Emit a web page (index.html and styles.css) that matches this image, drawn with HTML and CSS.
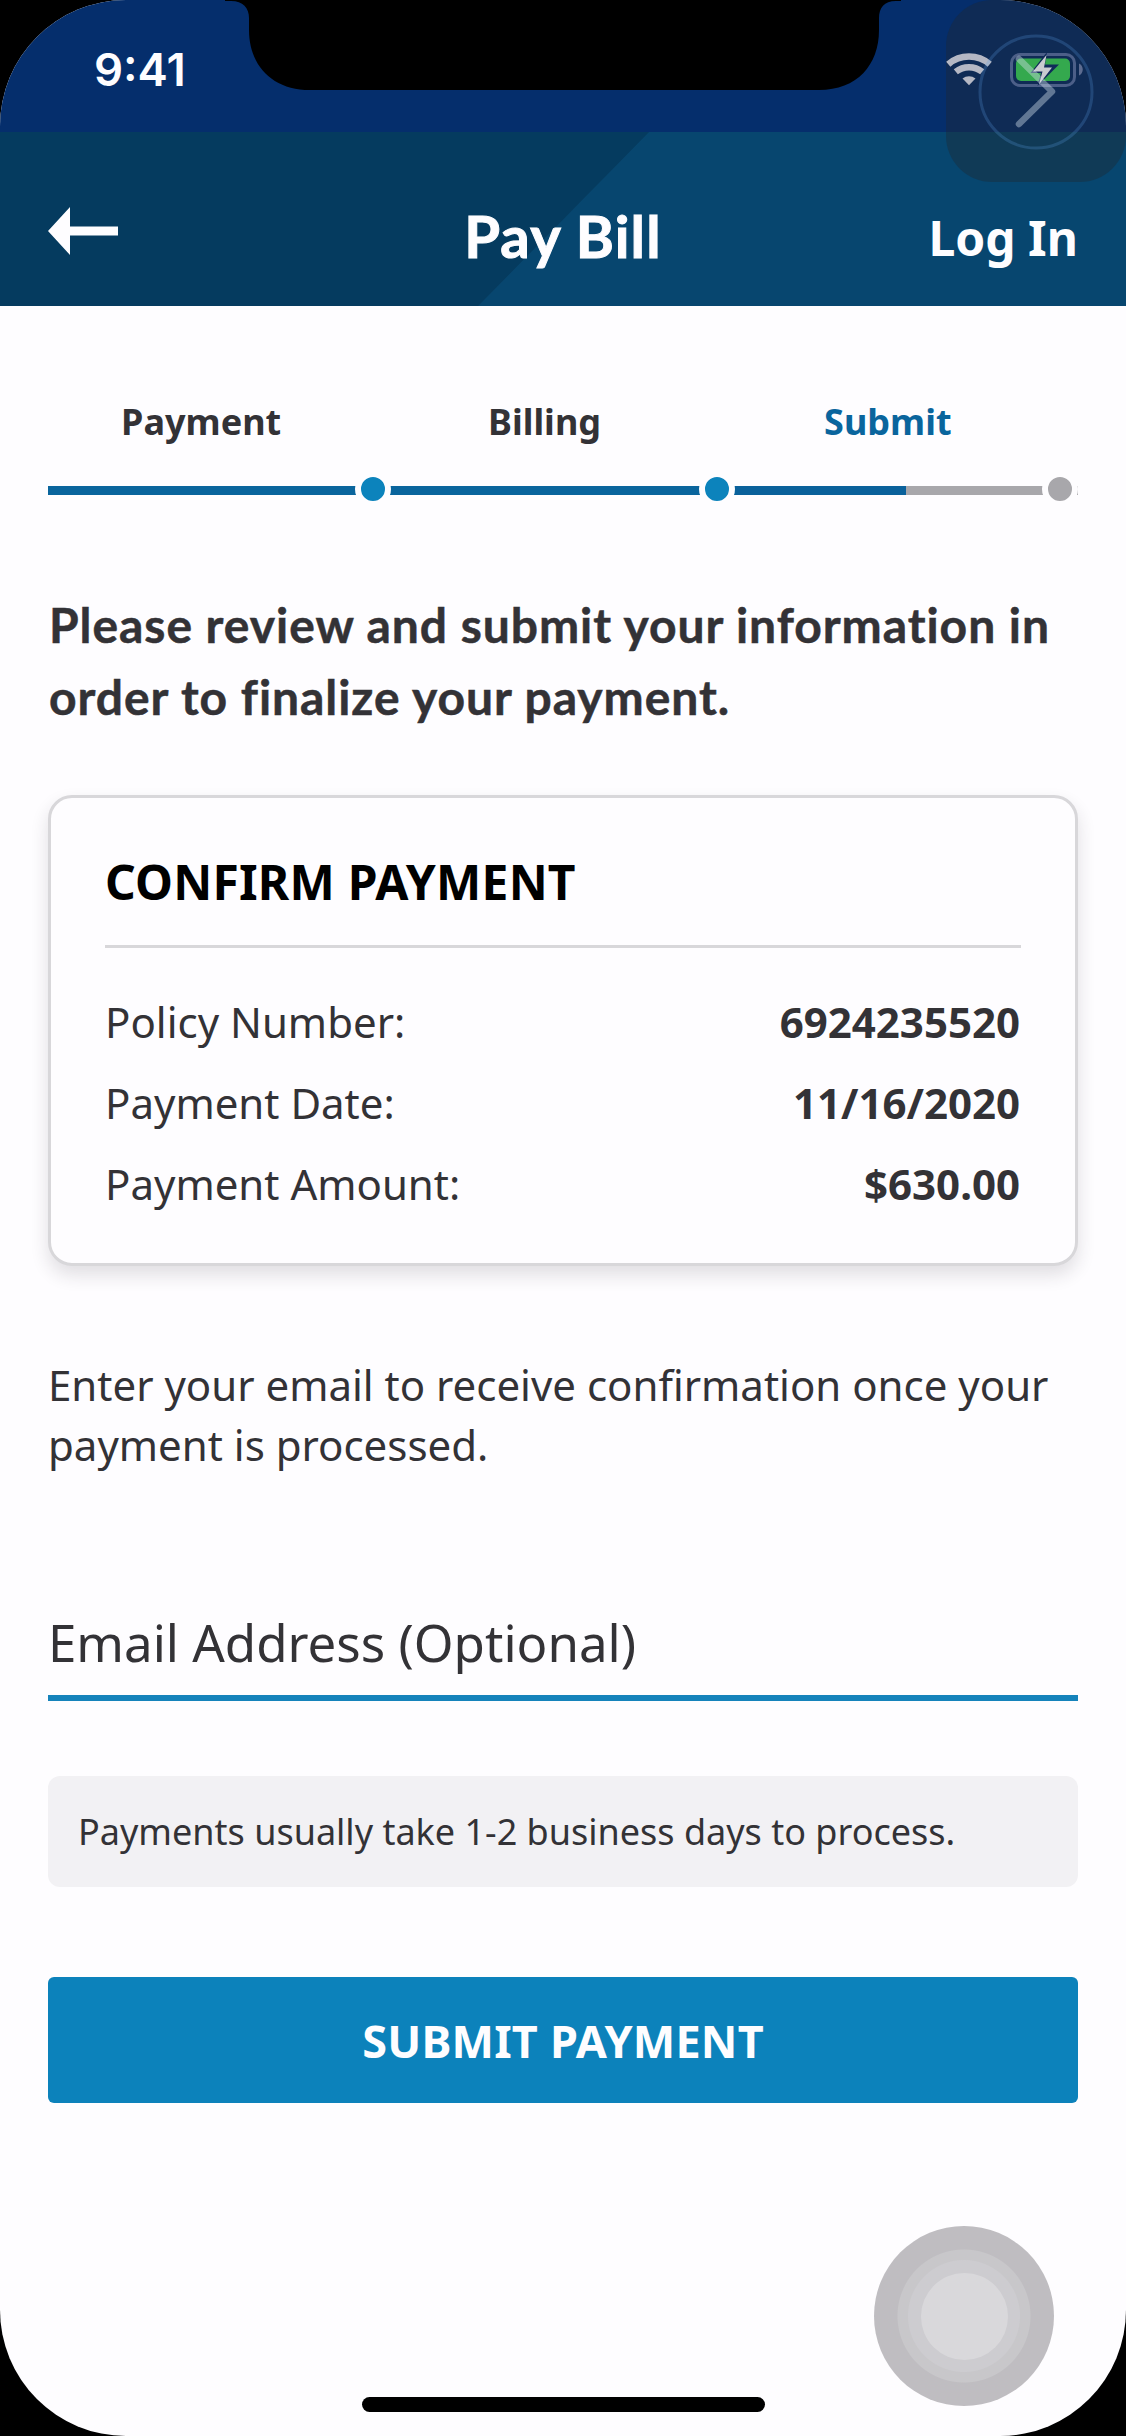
FILE: index.html
```html
<!DOCTYPE html>
<html lang="en">
<head>
<meta charset="utf-8">
<title>Pay Bill</title>
<link rel="stylesheet" href="styles.css">
</head>
<body>
<div class="phone">
  <div class="status">
    <span class="clock">9:41</span>
    <svg class="status-icons" width="140" height="36" viewBox="0 0 140 36">
      <g fill="none" stroke="#b5b8c4" stroke-width="6.5">
        <path d="M2.3 13.2A32 32 0 0 1 43.7 13.2"/>
        <path d="M9.8 20.8A21 21 0 0 1 36.2 20.8"/>
      </g>
      <path d="M23 34.3L16.5 27.5A10.5 10.5 0 0 1 29.500 27.500Z" fill="#b5b8c4"/>
      <rect x="65.500" y="3.500" width="63" height="31" rx="8.500" fill="none" stroke="#4c5f88" stroke-width="3"/>
      <path d="M133 12.500C138 14.500 138 22.500 133 24.500Z" fill="#5d6c90"/>
      <rect x="70" y="7.500" width="54" height="22.500" rx="5" fill="#34a94e"/>
      <path d="M101 1L84.500 22H95L91.500 35L113 13.500H99Z" fill="#102b59"/>
      <path d="M100.500 4L87 20.500H96.500L93 33.500L106 16.500H98Z" fill="#c9cbd0"/>
    </svg>
  </div>
  <header class="header">
    <a class="back" href="#" aria-label="Back">
      <svg width="70" height="48" viewBox="0 0 70 48"><path d="M0 24L22 0V19.500H70V28.500H22V48Z" fill="#fefdff"/></svg>
    </a>
    <h1 class="title">Pay Bill</h1>
    <a class="login" href="#">Log In</a>
  </header>
  <main class="content">
    <ol class="steps">
      <li class="step"><span class="step-name">Payment</span><div class="track"><i class="dot"></i></div></li>
      <li class="step"><span class="step-name">Billing</span><div class="track"><i class="dot"></i></div></li>
      <li class="step current"><span class="step-name">Submit</span><div class="track"><i class="dot"></i></div></li>
    </ol>
    <h2 class="intro">Please review and submit your information in<br>order to finalize your payment.</h2>
    <section class="card">
      <h3 class="card-title">CONFIRM PAYMENT</h3>
      <dl class="rows">
        <div class="row"><dt>Policy Number:</dt><dd>6924235520</dd></div>
        <div class="row"><dt>Payment Date:</dt><dd>11/16/2020</dd></div>
        <div class="row"><dt>Payment Amount:</dt><dd>$630.00</dd></div>
      </dl>
    </section>
    <p class="hint">Enter your email to receive confirmation once your<br>payment is processed.</p>
    <label class="field">Email Address (Optional)</label>
    <p class="note">Payments usually take 1-2 business days to process.</p>
    <button class="submit" type="button">SUBMIT PAYMENT</button>
  </main>
  <div class="shortcut"></div>
  <svg class="shortcut-mark" width="180" height="183" viewBox="0 0 180 183">
    <circle cx="90" cy="92" r="56" fill="none" stroke="#5ba0e8" stroke-opacity=".24" stroke-width="3"/>
    <path d="M73 59L106 91.500L73 124" fill="none" stroke="#d5e0ec" stroke-opacity=".42" stroke-width="6.500" stroke-linecap="round" stroke-linejoin="round"/>
  </svg>
  <svg class="notch" width="676" height="91" viewBox="0 0 676 91">
    <path d="M0 0H676V1H671C659 1 654 8 654 18V30C654 65 632 90 594 90H85C47 90 24 65 24 30V18C24 8 18 1 6 1H0Z"/>
  </svg>
  <div class="assistive"><i></i></div>
  <div class="home-bar"></div>
</div>
</body>
</html>
```
FILE: styles.css
```css
* { box-sizing: border-box; }

body {
  margin: 0;
  background: #000;
  color: #333236;
  font-family: "Noto Sans", "Open Sans", sans-serif;
}

h1, h2, h3, p, ol, dl, dd { margin: 0; padding: 0; }
a { color: inherit; text-decoration: none; }

.phone {
  position: relative;
  display: flex;
  flex-direction: column;
  width: 1126px;
  height: 2436px;
  overflow: hidden;
  border-radius: 126px;
  background: #fefdff;
}

.status {
  display: flex;
  justify-content: space-between;
  align-items: flex-start;
  height: 132px;
  padding: 52px 40px 0 94px;
  background: #052e6c;
}

.clock {
  color: #fefdff;
  font: 600 45.5px/36px Inter, sans-serif;
}

.status-icons { position: relative; z-index: 2; margin-top: -1px; }

.header {
  display: grid;
  grid-template-columns: 1fr auto 1fr;
  align-items: center;
  height: 174px;
  padding: 0 48px;
  background: linear-gradient(134.5deg, #053b5f 50%, #07466f 50.1%);
  color: #fefdff;
}

.back { display: flex; padding-top: 24px; }
.title {
  padding-top: 33px;
  font: 700 58px/70px Lato, sans-serif;
  letter-spacing: 1.2px;
  -webkit-text-stroke: 1px;
}
.login { justify-self: end; padding-top: 38px; font-size: 48px; font-weight: 700; line-height: 66px; }

.content { display: flex; flex-direction: column; padding: 92px 48px 0; }

.steps { display: grid; grid-template-columns: repeat(3, 1fr); list-style: none; }
.step { display: flex; flex-direction: column; gap: 40px; }
.step-name { padding-right: 37px; font-size: 36px; font-weight: 700; line-height: 48px; text-align: center; }
.current .step-name { color: #0a659d; }

.track {
  display: flex;
  justify-content: flex-end;
  align-items: center;
  height: 9px;
  background: #0a659d;
}
.current .track { background: linear-gradient(90deg, #0a619b 50%, #a8a7ab 50%); }
.dot {
  flex: none;
  width: 36px;
  height: 36px;
  margin-bottom: 3px;
  border: 6px solid #fefdff;
  border-radius: 50%;
  background: #0c83bc;
}
.current .dot { background: #a8a7ab; }

.intro {
  margin-top: 94px;
  padding-left: 1px;
  font: 700 48px/72px Lato, sans-serif;
  letter-spacing: .95px;
  white-space: nowrap;
  -webkit-text-stroke: .5px;
}

.card {
  margin-top: 62px;
  padding: 51px 54px 39px;
  border: 3px solid #d8d7da;
  border-radius: 24px;
  background: #fefdff;
  box-shadow: 0 9px 18px rgba(40, 35, 50, .14);
}
.card-title {
  padding-bottom: 30px;
  border-bottom: 3px solid #d8d7da;
  color: #000;
  font-size: 48px;
  line-height: 66px;
  letter-spacing: .2px;
}
.rows { margin-top: 33px; font-size: 42px; line-height: 81px; }
.row { display: flex; justify-content: space-between; }
.row dd { padding-right: 1px; font-weight: 700; }

.hint { margin-top: 89px; font-size: 42px; line-height: 60px; white-space: nowrap; }

.field {
  margin-top: 132px;
  padding-bottom: 18px;
  border-bottom: 6px solid #1583bb;
  font-size: 51px;
  line-height: 70px;
}

.note {
  display: flex;
  align-items: center;
  height: 111px;
  margin-top: 75px;
  padding-left: 30px;
  border-radius: 12px;
  background: #f2f1f4;
  font-size: 36px;
}

.submit {
  height: 126px;
  margin-top: 90px;
  padding: 2px 0 0;
  border: 0;
  border-radius: 6px;
  background: #0c82bb;
  color: #fefdff;
  font: 700 45px/60px "Noto Sans", sans-serif;
  letter-spacing: .2px;
}

/* System chrome floating over the page */
.shortcut {
  position: absolute;
  top: 0;
  right: 0;
  width: 180px;
  height: 182px;
  border-radius: 46px;
  background: rgba(32, 39, 47, .38);
}
.shortcut-mark { position: absolute; z-index: 3; top: 0; right: 0; }
.notch { position: absolute; top: 0; left: 225px; }
.assistive {
  position: absolute;
  left: 874px;
  top: 2226px;
  display: grid;
  place-items: center;
  width: 180px;
  height: 180px;
  border-radius: 50%;
  background: radial-gradient(circle closest-side, #cdccd0 0 55.500px, #c8c7ca 56.500px 66px, #bfbdc1 67px);
}
.assistive i { width: 87px; height: 87px; border-radius: 50%; background: #d9d8db; }
.home-bar {
  position: absolute;
  left: 362px;
  bottom: 24px;
  width: 403px;
  height: 15px;
  border-radius: 8px;
  background: #000;
}
```
